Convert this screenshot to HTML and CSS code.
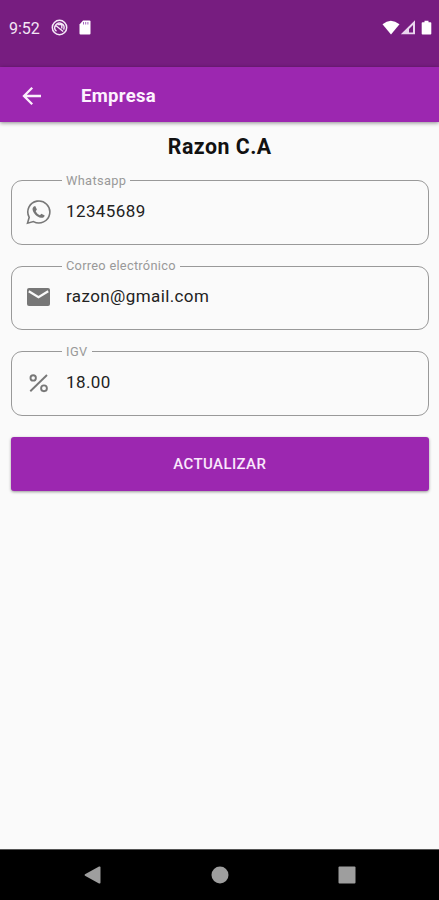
FILE: index.html
```html
<!DOCTYPE html>
<html lang="es">
<head>
<meta charset="utf-8">
<title>Empresa</title>
<link rel="stylesheet" href="styles.css">
</head>
<body>
<div class="screen">
  <header class="status">
    <span class="time">9:52</span>
    <svg class="dnd" width="17" height="17" viewBox="0 0 17 17" fill="none" stroke="#f6e9f8">
      <circle cx="8.500" cy="8.500" r="7.200" stroke-width="1.500"/>
      <path d="M5.500 12.300A4.600 4.600 0 1 1 12.600 10.600M4.800 6.500l7.400 6M6.500 5.600h4.300v4" stroke-width="1.400"/>
    </svg>
    <svg class="sd" width="12" height="15" viewBox="0 0 12 15">
      <path d="M4 .5h6.500q1 0 1 1v12q0 1-1 1h-9q-1 0-1-1V4.500z" fill="#fff"/>
      <path d="M4.500 2v2.500M6.700 2v2.500M8.900 2v2.500" stroke="#7b1fa2" stroke-width=".7"/>
    </svg>
    <svg class="signals" width="52" height="16" viewBox="0 0 52 16">
      <path d="M.5 4.300Q8.700-2.700 17.500 4.300L9 14.500z" fill="#fff"/>
      <path d="M18.800 14.300L33 .3v14z" fill="#ead6ee"/>
      <path d="M27 12.500V8.900l4-4v7.600z" fill="#771d80"/>
      <path d="M40.500 2.200h2V.7h4v1.500h2q.8 0 .8.8v10.700q0 .8-.8.8h-8q-.8 0-.8-.8V3q0-.8.8-.8z" fill="#fff"/>
    </svg>
  </header>
  <nav class="appbar">
    <svg width="20" height="20" viewBox="0 0 20 20" fill="none" stroke="#fbeffc" stroke-width="2.300"><path d="M19 10H2.500M10.200 1.800L2 10l8.200 8.200"/></svg>
    <h1>Empresa</h1>
  </nav>
  <main class="content">
    <h2>Razon C.A</h2>
    <fieldset class="field">
      <legend class="l1">Whatsapp</legend>
      <svg class="icon" width="26" height="26" viewBox="0 0 26 26" fill="none" stroke="#777">
        <path d="M2.500 24.200l1.700-5.900A11 11 0 1 1 8.500 22.600z" stroke-width="1.600"/>
        <path d="M8.800 7.600l1.400-.5 1.700 3.400-1.200 1.700c1 2 2.300 3.100 4.200 4l1.500-1.500 3.300 1.700c-.3 2-1.900 2.700-3.700 2.400-4-.9-7.600-4.300-8.400-8.100-.2-1.200.2-2.300 1.200-3.100z" fill="#777" stroke="none"/>
      </svg>
      <span class="value">12345689</span>
    </fieldset>
    <fieldset class="field">
      <legend class="l2">Correo electrónico</legend>
      <svg class="icon" width="26" height="26" viewBox="0 0 26 26">
        <rect x="2" y="4" width="23" height="18" rx="2" fill="#777"/>
        <path d="M3.800 7.200l9.700 6.100 9.700-6.100" fill="none" stroke="#fafafa" stroke-width="2.200"/>
      </svg>
      <span class="value">razon@gmail.com</span>
    </fieldset>
    <fieldset class="field">
      <legend class="l3">IGV</legend>
      <svg class="icon" width="26" height="26" viewBox="0 0 26 26" fill="none" stroke="#777" stroke-width="1.900">
        <path d="M5.300 21.300L22 5"/><circle cx="8.200" cy="7.900" r="2.700"/><circle cx="19" cy="18.300" r="2.900"/>
      </svg>
      <span class="value">18.00</span>
    </fieldset>
    <button class="submit" type="button">ACTUALIZAR</button>
  </main>
  <footer class="navbar">
    <svg width="18" height="20" viewBox="0 0 18 20"><path d="M1 9.300Q0 10 1 10.700L15 18.400Q16.500 19 16.500 17.500V2.500Q16.500 1 15 1.600z" fill="#9e9e9e"/></svg>
    <svg width="18" height="18" viewBox="0 0 18 18"><circle cx="9" cy="9" r="8.500" fill="#9e9e9e"/></svg>
    <svg width="18" height="18" viewBox="0 0 18 18"><rect x=".5" y=".5" width="17" height="17" rx="1" fill="#9e9e9e"/></svg>
  </footer>
</div>
</body>
</html>
```
FILE: styles.css
```css
* { box-sizing: border-box; }
body { margin: 0; font-family: Roboto, sans-serif; background: #fafafa; }
.screen { height: 900px; display: flex; flex-direction: column; overflow: hidden; }
.status {
  height: 67px; flex: none; display: flex; align-items: flex-start;
  padding: 19px 5px 0 9px; background: #771d80; color: #f3e6f5;
}
.time { width: 42px; font-size: 16px; line-height: 19px; }
.dnd { margin-right: 11px; }
.sd { margin-top: 1px; }
.signals { margin-left: auto; margin-top: 1px; }
.appbar {
  height: 55px; flex: none; display: flex; align-items: center; gap: 39px;
  padding: 2px 0 0 22px; background: #9c27b0; color: #fdf2fe;
  box-shadow: 0 1px 4px rgba(0, 0, 0, .45);
}
h1 { margin: 0; font-size: 18.500px; line-height: 24px; font-weight: 700; letter-spacing: .3px; }
.content { flex: 1; padding: 12px 10.500px 0 11px; }
h2 { margin: 0 0 13.500px; color: #111; font-size: 21.300px; line-height: 25px; font-weight: 700; text-align: center; letter-spacing: .5px; }
.field {
  min-width: 0; height: 72px; margin: 0 0 13.700px; padding: 0 0 0 13px;
  display: flex; align-items: flex-start; gap: 15px;
  border: 1px solid #999; border-radius: 11px;
}
legend { height: 16px; margin-left: 37px; padding: 0 4px; color: #999; font-size: 12.800px; line-height: 15px; white-space: nowrap; }
.l1 { letter-spacing: .35px; }
.l2 { letter-spacing: .28px; }
.l3 { letter-spacing: .4px; }
.icon { flex: none; margin-top: 10px; }
.value { margin-top: 10px; color: #222; font-size: 17px; line-height: 24px; letter-spacing: .4px; }
.submit {
  display: block; width: 100%; height: 54px; margin: 21.500px 0 0; padding: 0; border: 0; border-radius: 3px;
  background: #9c27b0; color: #fae8fc; font: 500 15px/55px Roboto, sans-serif; letter-spacing: .4px;
  box-shadow: 0 1px 3px rgba(0, 0, 0, .4);
}
.navbar {
  height: 51px; flex: none; display: flex; justify-content: space-between; align-items: center;
  padding: 0 83px 0 84px; background: #000; border-top: 1px solid #555;
}
```
